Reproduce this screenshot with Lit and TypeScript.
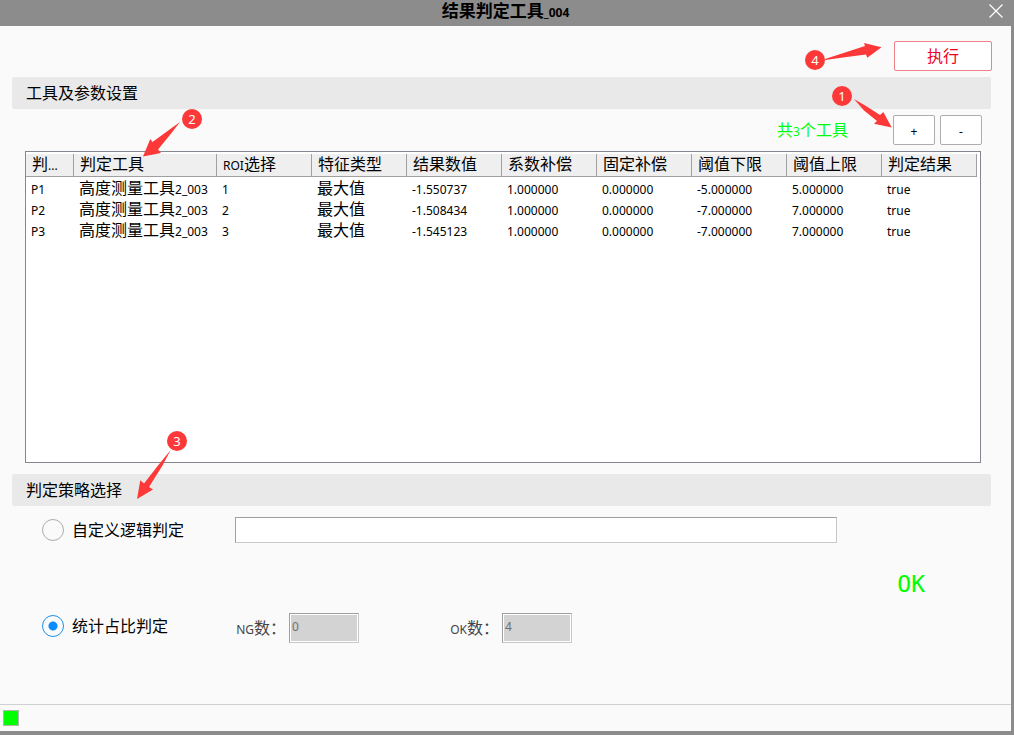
import { LitElement, html, css, svg } from "lit";
import { customElement, property, state } from "lit/decorators.js";

// Latin runs are set smaller than the Chinese characters around them.
const mixed = (text: string) =>
  text
    .split(/([\x20-\x7e]+)/)
    .filter((run) => run !== "")
    .map((run) => (/^[\x20-\x7e]+$/.test(run) ? html`<span class="latin">${run}</span>` : run));

const latinStyles = css`
  .latin {
    font-size: 12px;
    line-height: 12px;
  }
`;

interface Marker {
  width: number;
  height: number;
  cx: number;
  cy: number;
  arrow: string;
}

const MARKERS: Record<number, Marker> = {
  1: { width: 60, height: 42, cx: 10, cy: 10, arrow: "M22 13 L34 20 L48 29 L51.3 26 L59.7 41.6 L42 37.7 L45 35 L32 24.5Z" },
  2: { width: 59, height: 48, cx: 49, cy: 10, arrow: "M37 13 L28 19.5 L9.5 33 L7.3 30 L0 47.5 L18 44 L15 40.5 L28.5 24Z" },
  3: { width: 50, height: 68, cx: 40, cy: 10, arrow: "M33.7 19 L21 34.5 L7 52.5 L3.3 49.3 L0 68 L16 58.5 L12 56 L25.5 34.5Z" },
  4: { width: 77, height: 28, cx: 10, cy: 17, arrow: "M20 16 L60 3 L59 0 L76.5 4.3 L62.3 14.7 L61 11.5 L38 14.5 L20 17Z" },
};

@customElement("step-marker")
export class StepMarker extends LitElement {
  @property({ type: Number }) step = 1;

  static styles = css`
    :host {
      display: block;
      pointer-events: none;
    }
    .art {
      display: block;
      overflow: visible;
    }
    .shape {
      fill: #fc3838;
    }
    .digit {
      fill: #fff;
      font: 13px "Noto Sans", sans-serif;
      text-anchor: middle;
    }
  `;

  render() {
    const m = MARKERS[this.step];
    return html`<svg class="art" width=${m.width} height=${m.height} viewBox="0 0 ${m.width} ${m.height}">
      ${svg`<path class="shape" d=${m.arrow}></path>
      <circle class="shape" cx=${m.cx} cy=${m.cy} r="10"></circle>
      <text class="digit" x=${m.cx} y=${m.cy + 5}>${this.step}</text>`}
    </svg>`;
  }
}

const COLUMNS = ["判...", "判定工具", "ROI选择", "特征类型", "结果数值", "系数补偿", "固定补偿", "阈值下限", "阈值上限", "判定结果"];

const ROWS = [
  ["P1", "高度测量工具2_003", "1", "最大值", "-1.550737", "1.000000", "0.000000", "-5.000000", "5.000000", "true"],
  ["P2", "高度测量工具2_003", "2", "最大值", "-1.508434", "1.000000", "0.000000", "-7.000000", "7.000000", "true"],
  ["P3", "高度测量工具2_003", "3", "最大值", "-1.545123", "1.000000", "0.000000", "-7.000000", "7.000000", "true"],
];

@customElement("tool-table")
export class ToolTable extends LitElement {
  static styles = [
    latinStyles,
    css`
      :host {
        display: block;
        box-sizing: border-box;
        border: 1px solid #828790;
        background: #fff;
        padding: 2px 3px 0 0;
      }
      .grid {
        width: 100%;
        table-layout: fixed;
        border-collapse: separate;
        border-spacing: 0;
      }
      .narrow {
        width: 48px;
      }
      .wide {
        width: 143px;
      }
      .head,
      .cell {
        box-sizing: border-box;
        padding: 0 0 0 6px;
        text-align: left;
        font-weight: normal;
        white-space: nowrap;
        overflow: hidden;
      }
      .head {
        height: 23px;
        line-height: 20px;
        padding-bottom: 2px;
        background: #efefef;
        border-right: 1px solid #a0a0a0;
        border-bottom: 1px solid #a0a0a0;
      }
      .cell {
        height: 21px;
        padding-left: 5px;
        line-height: 20px;
      }
    `,
  ];

  render() {
    return html`<table class="grid">
      <colgroup>
        <col class="narrow" />
        <col class="wide" />
        ${COLUMNS.slice(2).map(() => html`<col />`)}
      </colgroup>
      <thead>
        <tr>
          ${COLUMNS.map((c) => html`<th class="head" scope="col">${mixed(c)}</th>`)}
        </tr>
      </thead>
      <tbody>
        ${ROWS.map((r) => html`<tr>${r.map((c) => html`<td class="cell">${mixed(c)}</td>`)}</tr>`)}
      </tbody>
    </table>`;
  }
}

@customElement("app-root")
export class AppRoot extends LitElement {
  @state() private strategy = "ratio";

  static styles = [
    latinStyles,
    css`
      :host {
        display: flex;
        flex-direction: column;
        box-sizing: border-box;
        min-height: 100vh;
        border: 0 solid #8c8c8c;
        border-width: 0 3px 4px 0;
        background: #fafafa;
        color: #000;
        font: 16px/24px "Noto Sans", "Noto Sans CJK SC", sans-serif;
      }
      .titlebar {
        display: grid;
        grid-template-columns: 30px 1fr 30px;
        height: 26px;
        margin-right: -3px;
        padding-right: 3px;
        background: #8c8c8c;
      }
      .title {
        grid-column: 2;
        margin: 0;
        text-align: center;
        font-size: 17px;
        line-height: 22px;
        font-weight: bold;
      }
      .close {
        display: grid;
        place-items: center;
        height: 21px;
        padding: 0;
        border: 0;
        background: none;
      }
      .body {
        display: flex;
        flex-direction: column;
        flex: 1;
        padding: 15px 19px 0 12px;
      }
      .actions {
        display: flex;
        justify-content: flex-end;
        margin-bottom: 6px;
      }
      .anchor {
        position: relative;
        display: flex;
      }
      .mark {
        position: absolute;
        z-index: 1;
      }
      .mark-run {
        right: 110px;
        top: 2px;
      }
      .mark-add {
        right: 43px;
        top: -29px;
      }
      .mark-table {
        left: 118px;
        top: -42px;
      }
      .mark-strategy {
        left: 125px;
        top: -43px;
      }
      .button {
        box-sizing: border-box;
        width: 42px;
        height: 30px;
        padding: 0;
        border: 1px solid #adadad;
        border-radius: 2px;
        background: #fff;
        color: #000;
        font: inherit;
        line-height: 26px;
      }
      .run {
        width: 98px;
        border-color: #ee8088;
        color: #f00020;
      }
      .section {
        position: relative;
        margin: 0 1px 0 0;
        padding: 4px 14px;
        border-radius: 2px;
        background: #e9e9e9;
        font-size: 16px;
        font-weight: normal;
      }
      .toolbar {
        display: flex;
        justify-content: flex-end;
        align-items: center;
        gap: 5px;
        margin: 6px 10px 6px 13px;
      }
      .count {
        margin-right: 40px;
        line-height: 26px;
        color: #0f0;
      }
      .list {
        display: flex;
        position: relative;
        flex: 1;
        min-height: 200px;
        margin: 0 11px 11px 13px;
      }
      .table {
        flex: 1;
        min-width: 0;
      }
      .options {
        display: flex;
        flex-direction: column;
        padding: 9px 67px 63px 30px;
      }
      .option {
        display: flex;
        align-items: center;
        height: 30px;
      }
      .choice {
        display: flex;
        align-items: center;
        gap: 8px;
        width: 193px;
      }
      .radio {
        appearance: none;
        box-sizing: border-box;
        width: 22px;
        height: 22px;
        margin: 0;
        border: 1px solid #adadad;
        border-radius: 50%;
        background: #fafafa;
      }
      .radio:checked {
        border-color: #1e90e8;
        background: radial-gradient(circle, #0a8cff 0 4px, #fafafa 5px);
      }
      .field {
        box-sizing: border-box;
        border: 1px solid;
        border-color: #a0a0a0 #c8c8c8 #c8c8c8 #a0a0a0;
        background: #fff;
        color: #000;
        font: inherit;
        font-size: 12px;
      }
      .expression {
        flex: 1;
        min-width: 0;
        height: 26px;
        margin-right: 88px;
      }
      .verdict {
        display: block;
        height: 66px;
        line-height: 78px;
        text-align: right;
        color: #0f0;
        font-family: "DejaVu Sans Mono", monospace;
        font-size: 23px;
      }
      .amount {
        display: flex;
        align-items: center;
        gap: 3px;
        width: 213px;
        padding-top: 4px;
        color: #444;
      }
      .amount-name {
        width: 51px;
        text-align: right;
        white-space: nowrap;
      }
      .number {
        width: 70px;
        height: 30px;
        padding: 0 2px 4px;
        background: #d3d3d3;
        box-shadow: inset 0 0 0 1px #fff;
        color: #707070;
      }
      .status {
        display: flex;
        padding: 5px 3px;
        border-top: 1px solid #d0d0d0;
      }
      .lamp {
        box-sizing: border-box;
        width: 16px;
        height: 16px;
        border: 1px solid #b4b4b4;
        background: #0f0;
      }
    `,
  ];

  private choice(value: string, label: string) {
    return html`<label class="choice">
      <input
        class="radio"
        type="radio"
        name="strategy"
        value=${value}
        .checked=${this.strategy === value}
        @change=${() => (this.strategy = value)}
      />
      <span>${label}</span>
    </label>`;
  }

  private amount(label: string, value: string) {
    return html`<label class="amount">
      <span class="amount-name">${mixed(label)}</span>
      <input class="field number" type="text" .value=${value} disabled />
    </label>`;
  }

  render() {
    return html`
      <header class="titlebar">
        <h1 class="title">${mixed("结果判定工具_004")}</h1>
        <button class="close" aria-label="关闭">
          <svg width="14" height="14" viewBox="0 0 14 14" fill="none" stroke="#fff" stroke-width="1.2">
            <path d="M0.5 0.5 13.5 13.5M13.5 0.5 0.5 13.5" />
          </svg>
        </button>
      </header>
      <main class="body">
        <div class="actions">
          <div class="anchor">
            <button class="button run">执行</button>
            <step-marker class="mark mark-run" .step=${4}></step-marker>
          </div>
        </div>
        <h2 class="section">工具及参数设置</h2>
        <div class="toolbar">
          <span class="count">${mixed("共3个工具")}</span>
          <div class="anchor">
            <button class="button">${mixed("+")}</button>
            <step-marker class="mark mark-add" .step=${1}></step-marker>
          </div>
          <button class="button">${mixed("-")}</button>
        </div>
        <div class="list">
          <tool-table class="table"></tool-table>
          <step-marker class="mark mark-table" .step=${2}></step-marker>
        </div>
        <h2 class="section">
          判定策略选择
          <step-marker class="mark mark-strategy" .step=${3}></step-marker>
        </h2>
        <div class="options">
          <div class="option">
            ${this.choice("custom", "自定义逻辑判定")}
            <input class="field expression" type="text" aria-label="自定义逻辑判定" />
          </div>
          <output class="verdict">OK</output>
          <div class="option">
            ${this.choice("ratio", "统计占比判定")} ${this.amount("NG数：", "0")} ${this.amount("OK数：", "4")}
          </div>
        </div>
      </main>
      <footer class="status"><span class="lamp"></span></footer>
    `;
  }
}
